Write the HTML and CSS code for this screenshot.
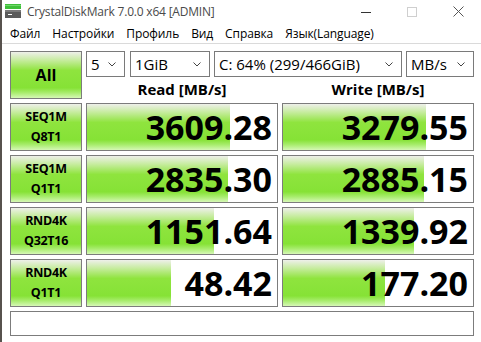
FILE: index.html
```html
<!DOCTYPE html>
<html lang="ru">
<head>
    <meta charset="UTF-8">
    <title>CrystalDiskMark 7.0.0 x64 [ADMIN]</title>
    <link rel="stylesheet" href="styles.css">
</head>
<body>
    <div class="window">
        <!-- Title bar -->
        <div class="titlebar">
            <svg class="app-icon" width="16" height="14" viewBox="0 0 16 14">
                <rect x="0" y="0" width="16" height="5" fill="#3fbf3a"/>
                <rect x="0" y="1" width="16" height="1" fill="#6fd86a"/>
                <rect x="0" y="6" width="16" height="8" fill="#5b5b5b"/>
                <rect x="0" y="6" width="16" height="2" fill="#7a7a7a"/>
                <rect x="3" y="10" width="4" height="1" fill="#ffffff"/>
            </svg>
            <span class="title-text">CrystalDiskMark 7.0.0 x64 [ADMIN]</span>
            <div class="win-buttons">
                <span class="win-btn">
                    <svg width="10" height="10" viewBox="0 0 10 10"><line x1="0" y1="5.5" x2="10" y2="5.5" stroke="#333" stroke-width="1"/></svg>
                </span>
                <span class="win-btn">
                    <svg width="10" height="10" viewBox="0 0 10 10"><rect x="0.5" y="0.5" width="9" height="9" fill="none" stroke="#cfcfcf" stroke-width="1"/></svg>
                </span>
                <span class="win-btn">
                    <svg width="11" height="11" viewBox="0 0 11 11"><path d="M0.5 0.5 L10.5 10.5 M10.5 0.5 L0.5 10.5" stroke="#555" stroke-width="1"/></svg>
                </span>
            </div>
        </div>

        <!-- Menu bar -->
        <div class="menubar">
            <span class="menu-item">Файл</span>
            <span class="menu-item">Настройки</span>
            <span class="menu-item">Профиль</span>
            <span class="menu-item">Вид</span>
            <span class="menu-item">Справка</span>
            <span class="menu-item">Язык(Language)</span>
        </div>

        <!-- Benchmark grid -->
        <main class="bench">
            <div class="cell btn-all">All</div>
            <div class="controls">
                <div class="selects">
                    <div class="select sel-count"><span>5</span><svg class="chev" width="8" height="5" viewBox="0 0 8 5"><path d="M0.5 0.5 L4 4 L7.5 0.5" fill="none" stroke="#444" stroke-width="1"/></svg></div>
                    <div class="select sel-size"><span>1GiB</span><svg class="chev" width="8" height="5" viewBox="0 0 8 5"><path d="M0.5 0.5 L4 4 L7.5 0.5" fill="none" stroke="#444" stroke-width="1"/></svg></div>
                    <div class="select sel-drive"><span>C: 64% (299/466GiB)</span><svg class="chev" width="8" height="5" viewBox="0 0 8 5"><path d="M0.5 0.5 L4 4 L7.5 0.5" fill="none" stroke="#444" stroke-width="1"/></svg></div>
                    <div class="select sel-unit"><span>MB/s</span><svg class="chev" width="8" height="5" viewBox="0 0 8 5"><path d="M0.5 0.5 L4 4 L7.5 0.5" fill="none" stroke="#444" stroke-width="1"/></svg></div>
                </div>
                <div class="headers">
                    <div class="col-head">Read [MB/s]</div>
                    <div class="col-head">Write [MB/s]</div>
                </div>
            </div>

            <div class="cell label">SEQ1M<br>Q8T1</div>
            <div class="value"><div class="bar" style="width: 75.5%"></div><span class="num">3609.28</span></div>
            <div class="value"><div class="bar" style="width: 75%"></div><span class="num">3279.55</span></div>

            <div class="cell label">SEQ1M<br>Q1T1</div>
            <div class="value"><div class="bar" style="width: 74%"></div><span class="num">2835.30</span></div>
            <div class="value"><div class="bar" style="width: 74%"></div><span class="num">2885.15</span></div>

            <div class="cell label">RND4K<br>Q32T16</div>
            <div class="value"><div class="bar" style="width: 67%"></div><span class="num">1151.64</span></div>
            <div class="value"><div class="bar" style="width: 69%"></div><span class="num">1339.92</span></div>

            <div class="cell label">RND4K<br>Q1T1</div>
            <div class="value"><div class="bar" style="width: 44%"></div><span class="num">48.42</span></div>
            <div class="value"><div class="bar" style="width: 53.5%"></div><span class="num">177.20</span></div>

            <div class="comment"></div>
        </main>
    </div>
</body>
</html>
```

FILE: styles.css
```css
/* Reset */
* {
    margin: 0;
    padding: 0;
    box-sizing: border-box;
}

html, body {
    width: 100%;
    height: 100%;
}

body {
    font-family: "Open Sans", "Noto Sans", sans-serif;
    background-color: #ffffff;
    color: #000;
    overflow: hidden;
}

/* Window frame - dark strip on the left edge */
.window {
    border-left: 2px solid #57524d;
    height: 100%;
}

/* Title bar */
.titlebar {
    height: 23px;
    display: flex;
    align-items: center;
    padding-left: 3px;
}

.app-icon {
    margin-top: -1px;
}

.title-text {
    font-size: 12px;
    color: #4a4a4a;
    margin-left: 6px;
    letter-spacing: -0.2px;
    flex: 1;
}

.win-buttons {
    display: flex;
    height: 100%;
}

.win-btn {
    width: 46px;
    display: flex;
    align-items: center;
    justify-content: center;
}

/* Menu bar */
.menubar {
    height: 21px;
    display: flex;
    align-items: center;
    padding-left: 1px;
    border-bottom: 1px solid #dadada;
    font-size: 12px;
}

.menu-item {
    padding: 0 6px;
    letter-spacing: -0.1px;
}

.menu-item:first-child {
    padding-left: 7px;
}

/* Benchmark grid */
.bench {
    display: grid;
    grid-template-columns: 72px 192px 192px;
    grid-template-rows: 48px 48px 48px 48px 48px 25px;
    gap: 4px;
    padding: 7px 0 0 8px;
}

.cell {
    border: 1px solid #7c7c7c;
    background: linear-gradient(to bottom, #eef0ea 0%, #c6ec9e 18%, #8fe43e 40%, #86e236 78%, #a6ec6a 88%, #d6f8b6 100%);
    display: flex;
    align-items: center;
    justify-content: center;
    text-align: center;
    font-weight: bold;
}

.btn-all {
    font-size: 16px;
}

.label {
    font-size: 12.5px;
    line-height: 20px;
    letter-spacing: -0.3px;
}

/* Top controls */
.controls {
    grid-column: 2 / 4;
    display: flex;
    flex-direction: column;
}

.selects {
    display: flex;
    height: 26px;
}

.select {
    border: 1px solid #7a7a7a;
    display: flex;
    align-items: center;
    justify-content: space-between;
    padding: 0 8px 0 4px;
    font-size: 15px;
    margin-right: 4px;
}

.sel-count { width: 39px; margin-right: 5px; }
.sel-size { width: 80px; }
.sel-drive { width: 188px; }
.sel-unit { width: 68px; margin-right: 0; }

.chev {
    flex-shrink: 0;
}

.headers {
    flex: 1;
    display: grid;
    grid-template-columns: 192px 192px;
    gap: 4px;
    align-items: center;
}

.col-head {
    text-align: center;
    font-weight: bold;
    font-size: 15px;
    padding-top: 2px;
}

/* Result cells */
.value {
    border: 1px solid #7c7c7c;
    position: relative;
    display: flex;
    align-items: center;
    justify-content: flex-end;
    padding-right: 5px;
    background: #fff;
}

.bar {
    position: absolute;
    left: 0;
    top: 0;
    bottom: 0;
    background: linear-gradient(to bottom, #eef0ea 0%, #c6ec9e 18%, #8fe43e 40%, #86e236 78%, #a6ec6a 88%, #d6f8b6 100%);
}

.num {
    position: relative;
    font-size: 34px;
    font-weight: bold;
    letter-spacing: 0;
}

.comment {
    grid-column: 1 / 4;
    border: 1px solid #7c7c7c;
}
```
